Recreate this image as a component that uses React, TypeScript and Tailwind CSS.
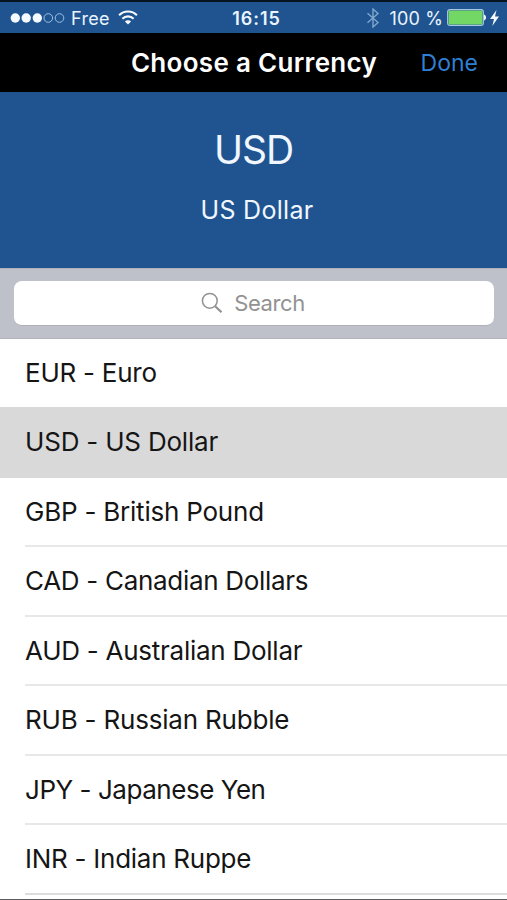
const currencies = [
  { label: "EUR - Euro", spacing: "tracking-[-0.25px]" },
  { label: "USD - US Dollar", spacing: "tracking-[-0.2px]" },
  { label: "GBP - British Pound", spacing: "tracking-[-0.22px]" },
  { label: "CAD - Canadian Dollars", spacing: "tracking-[-0.3px]" },
  { label: "AUD - Australian Dollar", spacing: "tracking-[-0.26px]" },
  { label: "RUB - Russian Rubble", spacing: "tracking-[-0.2px]" },
  { label: "JPY - Japanese Yen", spacing: "tracking-[-0.46px]" },
  { label: "INR - Indian Ruppe", spacing: "tracking-[-0.26px]" },
];

function Signal() {
  return (
    <svg width="56" height="12" viewBox="0 0 56 12" className="shrink-0">
      {[5.3, 16.2, 27.3].map((x) => (
        <circle key={x} cx={x} cy="6" r="4.7" fill="#f4faff" />
      ))}
      {[38.3, 49.5].map((x) => (
        <circle key={x} cx={x} cy="6" r="4.3" fill="none" stroke="#a9c9ec" strokeWidth="0.9" />
      ))}
    </svg>
  );
}

function Wifi() {
  return (
    <svg width="20" height="15" viewBox="0 0 20 15" fill="none" stroke="#f4faff" strokeWidth="2.1" className="shrink-0">
      <path d="M1.1 5.2a12.6 12.6 0 0 1 17.8 0" />
      <path d="M4.4 8.7a8 8 0 0 1 11.2 0" />
      <path d="M10 14.6 6.9 11.5a4.4 4.4 0 0 1 6.2 0Z" fill="#f4faff" stroke="none" />
    </svg>
  );
}

function StatusBar() {
  return (
    <div className="grid h-[33px] grid-cols-3 items-center border-t-2 border-[#071522] bg-[#205490] text-[#eaf4ff]">
      <div className="flex items-center pl-[10px]">
        <Signal />
        <span className="ml-[5px] mt-[2px] text-[18px] leading-none tracking-[0.3px]">Free</span>
        <span className="ml-[8px]"><Wifi /></span>
      </div>
      <div className="mt-[2px] pl-[6px] text-center text-[18px] font-semibold leading-none tracking-[0.9px]">16:15</div>
      <div className="flex items-center justify-end pr-[8px]">
        <svg width="14" height="20" viewBox="0 0 14 20" fill="none" stroke="#7fa6cf" strokeWidth="1.4">
          <path d="M1.5 5.2 12 14.5 7 19V1l5 4.5L1.5 14.8" />
        </svg>
        <span className="ml-[9px] mt-[2px] whitespace-nowrap text-[18px] leading-none tracking-[0.15px]">100 %</span>
        <svg width="40" height="17" viewBox="0 0 40 17" className="ml-[4px]">
          <rect x="0.6" y="0.6" width="35.8" height="15.8" rx="2.5" fill="#205490" stroke="#a6c8e4" strokeWidth="1.1" />
          <rect x="1.5" y="1.5" width="34" height="14" rx="1" fill="#72d765" />
          <path d="M37 5.5c2.8.8 2.8 5.2 0 6Z" fill="#eaf4ff" />
        </svg>
        <svg width="9" height="16" viewBox="0 0 9 16" className="ml-[3px]">
          <path d="M6.5 0 0 9h4L2.3 16 9 6.6H5Z" fill="#f4faff" />
        </svg>
      </div>
    </div>
  );
}

export default function App() {
  return (
    <div className="flex h-[900px] w-[507px] flex-col overflow-hidden bg-white font-[Inter,sans-serif]">
      <StatusBar />
      <header className="grid h-[59px] grid-cols-[1fr_auto_1fr] items-center bg-black pt-px">
        <h1 className="col-start-2 whitespace-nowrap pl-px text-[26px] font-semibold leading-none tracking-[0.3px] text-white">Choose a Currency</h1>
        <button className="justify-self-end pr-[29px] text-[23px] leading-none text-[#2f7fd2]">Done</button>
      </header>
      <section className="flex h-[176px] flex-col items-center bg-[#205490] pt-[37px] text-[#f0f7ff]">
        <div className="text-[39px] font-normal leading-[42px] tracking-[-1px]">USD</div>
        <div className="mt-[24px] pl-[7px] text-[25px] leading-[30px] tracking-[0.3px]">US Dollar</div>
      </section>
      <div className="h-[70.5px] shrink-0 border-b border-t border-[#b1b3bc] bg-[#bfc1ca] pl-[14px] pr-[13px] pt-[12px]">
        <div className="flex h-[45px] items-center justify-center rounded-[8px] border-b border-[#afb1b9] bg-white pr-[2px] text-[#929292]">
          <svg width="22" height="22" viewBox="0 0 22 22" fill="none" stroke="#929292">
            <circle cx="8.8" cy="8.8" r="7.4" strokeWidth="1.5" />
            <path d="m14.2 14.2 6.3 6" strokeWidth="2.2" />
          </svg>
          <span className="ml-[11px] text-[22px] leading-none tracking-[-0.4px]">Search</span>
        </div>
      </div>
      <ul className="h-[561.5px] shrink-0 text-[#151515]">
        {currencies.map(({ label, spacing }, i) => (
          <li
            key={label}
            className={`pl-[25px] ${i === 0 ? "h-[68.5px]" : i === 1 ? "h-[70.5px] bg-[#d9d9d9]" : "h-[69.5px]"}`}
          >
            <div className={`flex h-full items-center border-b-2 text-[26px] leading-none ${spacing} ${i < 2 ? "border-transparent pt-[2px]" : i === 7 ? "border-[#dddddd]" : "border-[#e8e8e8]"} ${i > 1 && i % 2 === 0 ? "pt-px" : ""}`}>
              {label}
            </div>
          </li>
        ))}
        <li className="mt-[4px] h-px bg-[#5c5d60]" />
      </ul>
    </div>
  );
}
